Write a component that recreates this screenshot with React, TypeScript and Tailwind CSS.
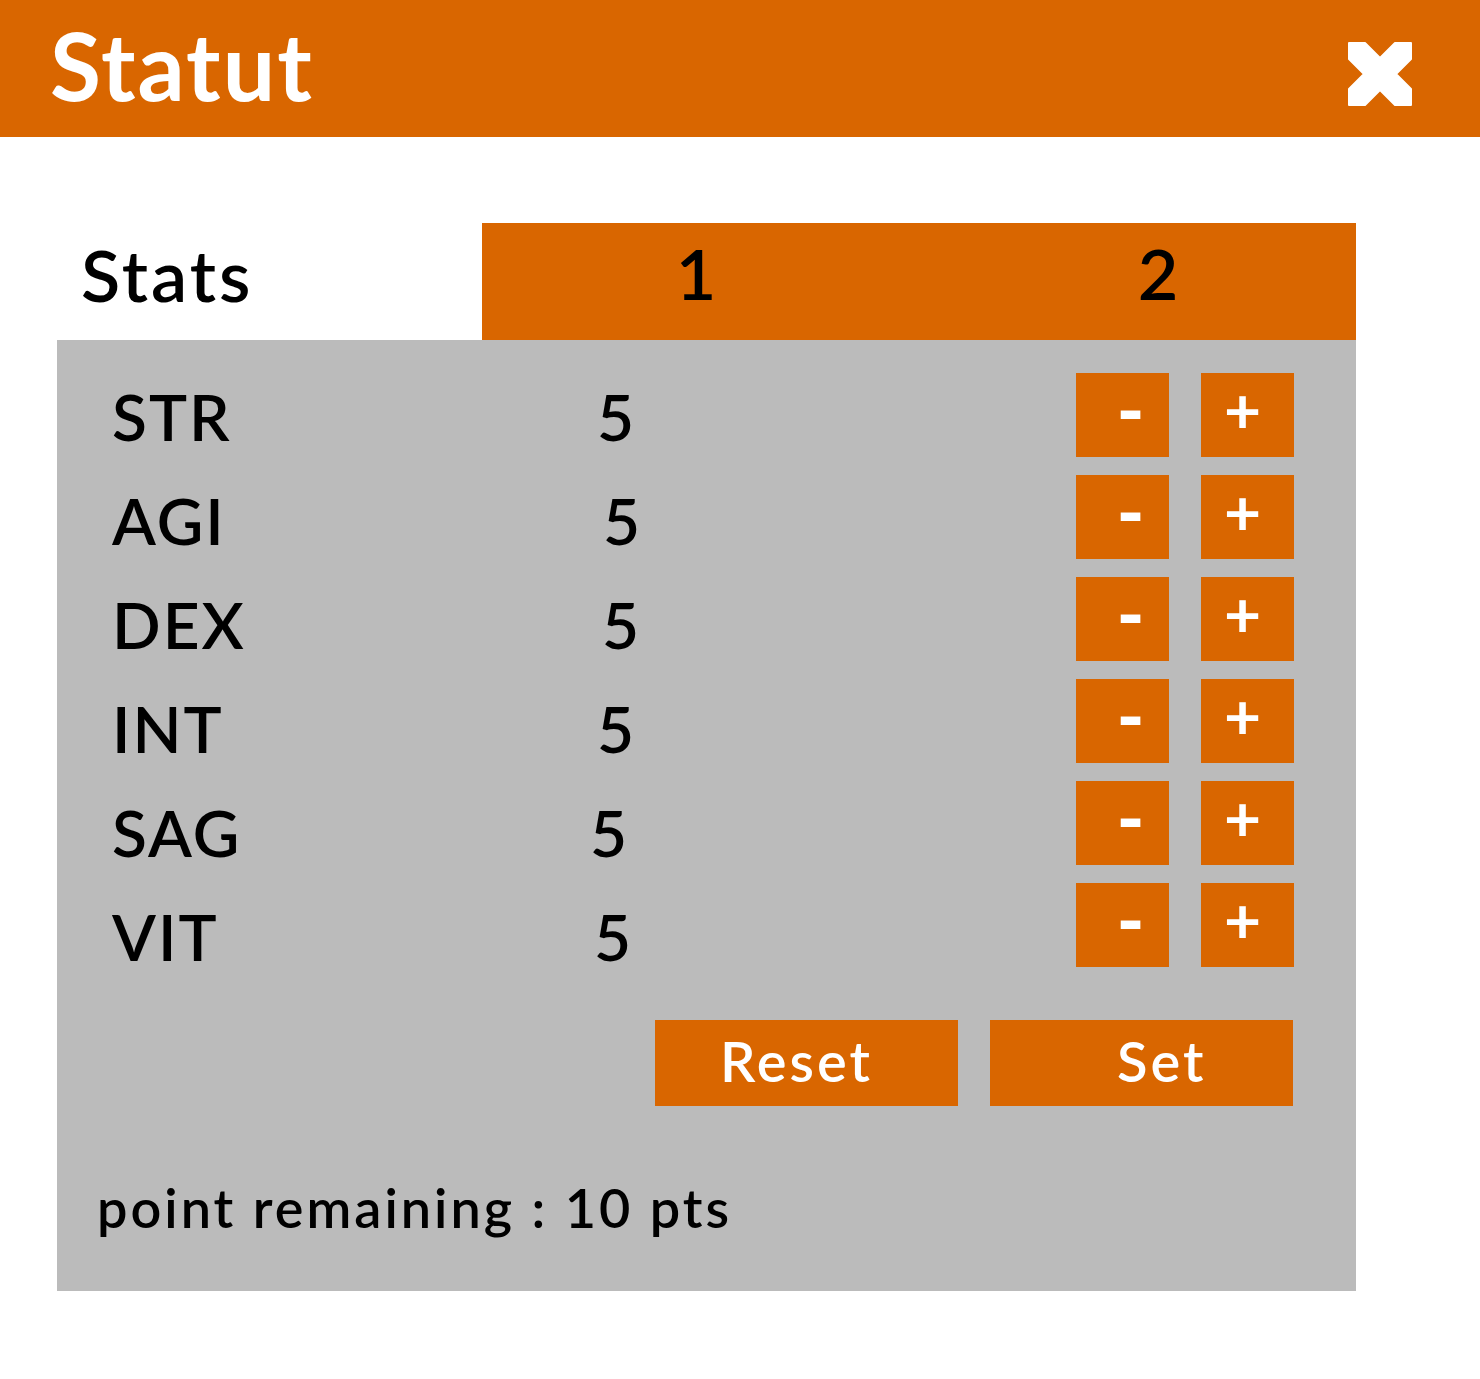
import React from 'react';

const stats = [
  { name: 'STR', value: 5, shift: 'pl-[7px]' },
  { name: 'AGI', value: 5, shift: 'pl-[13px]' },
  { name: 'DEX', value: 5, shift: 'pl-[12px]' },
  { name: 'INT', value: 5, shift: 'pl-[7px]' },
  { name: 'SAG', value: 5, shift: 'pl-0' },
  { name: 'VIT', value: 5, shift: 'pl-[4px]' },
];

function CloseIcon() {
  return (
    <svg width="64" height="64" viewBox="0 0 64 64" className="block mt-[10px]">
      <polygon
        points="1,1 17,1 32,16 47,1 63,1 63,17 48,32 63,47 63,63 47,63 32,48 17,63 1,63 1,47 16,32 1,17"
        fill="#ffffff"
        stroke="#ffffff"
        strokeWidth="2"
        strokeLinejoin="round"
      />
    </svg>
  );
}

export default function App() {
  return (
    <div className="w-[1480px] h-[1379px] bg-white font-['Lato',sans-serif]">
      {/* Title bar */}
      <div className="h-[137px] bg-[#d96600] flex items-center justify-between pl-[50px] pr-[68px]">
        <h1 className="text-[93px] font-bold leading-none tracking-[2px] text-white -mt-[6px]">Statut</h1>
        <CloseIcon />
      </div>

      <div className="ml-[57px] mt-[86px] w-[1299px]">
        {/* Table header */}
        <div className="flex h-[117px]">
          <div className="w-[425px] pl-[24px] pt-[15px]">
            <span className="text-[72px] font-semibold leading-none tracking-[3px] text-black">Stats</span>
          </div>
          <div className="flex-1 bg-[#d96600] flex items-start pt-[15px] text-[70px] font-semibold leading-none text-black">
            <div className="w-[428px] text-center">1</div>
            <div className="w-[60px] ml-[218px] text-center">2</div>
          </div>
        </div>

        {/* Stats panel */}
        <div className="h-[951px] bg-[#bbbbbb] flex flex-col">
          <div className="flex">
            <div className="flex-1 pt-[25px] pl-[55px]">
              {stats.map((s) => (
                <div key={s.name} className="h-[104px] flex text-[64px] font-semibold leading-[104px] text-black">
                  <span className="w-[478px] tracking-[2px]">{s.name}</span>
                  <span className={s.shift}>{s.value}</span>
                </div>
              ))}
            </div>
            <div className="pt-[33px] pr-[62px] flex flex-col gap-[18px]">
              {stats.map((s) => (
                <div key={s.name} className="flex gap-[32px]">
                  <button className="w-[93px] h-[84px] bg-[#d96600] text-white text-[74px] font-black leading-none flex items-center justify-center pl-[16px] pb-[12px]">
                    -
                  </button>
                  <button className="w-[93px] h-[84px] bg-[#d96600] text-white text-[64px] font-bold leading-none flex items-center justify-center pr-[10px] pb-[12px]">
                    +
                  </button>
                </div>
              ))}
            </div>
          </div>

          <div className="flex justify-end gap-[32px] pr-[63px] mt-[31px]">
            <button className="w-[303px] h-[86px] bg-[#d96600] text-white text-[56px] font-semibold leading-none tracking-[3px] flex items-center pl-[65px] pb-[4px]">
              Reset
            </button>
            <button className="w-[303px] h-[86px] bg-[#d96600] text-white text-[56px] font-semibold leading-none tracking-[3px] flex items-center pl-[127px] pb-[4px]">
              Set
            </button>
          </div>

          <p className="mt-[75px] pl-[40px] text-[54px] font-semibold leading-none text-black tracking-[3px]">
            point remaining : 10 pts
          </p>
        </div>
      </div>
    </div>
  );
}
